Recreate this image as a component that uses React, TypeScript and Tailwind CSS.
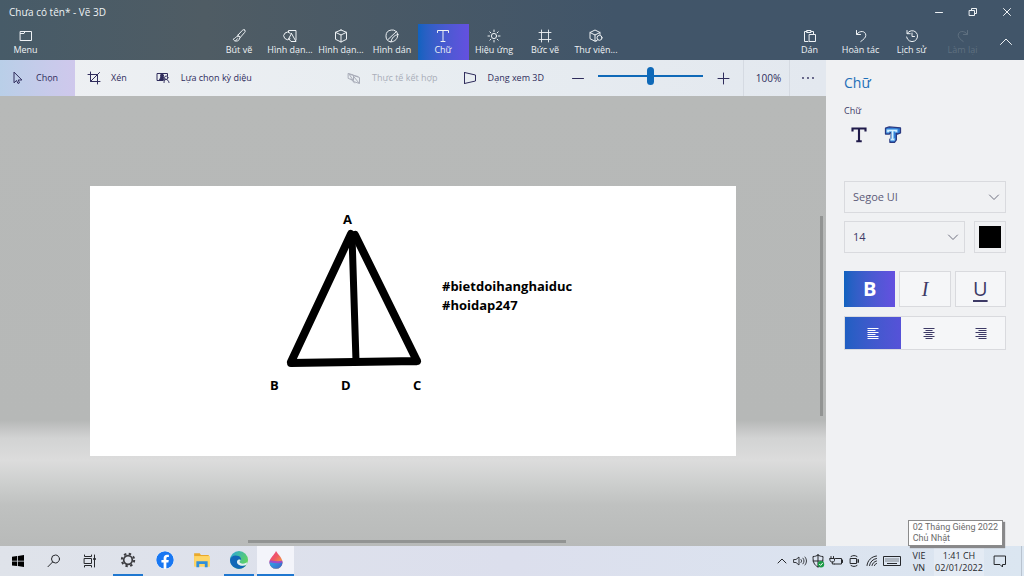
import React, {ReactNode, useState} from 'react'
import {FaFacebook} from 'react-icons/fa'

type IconProps = {
    children: ReactNode
    className?: string
}

const Icon = ({children, className = 'size-4'}: IconProps) => (
    <svg
        viewBox="0 0 16 16"
        className={className}
        fill="none"
        stroke="currentColor"
        strokeLinecap="round"
        strokeLinejoin="round"
        aria-hidden="true"
    >
        {children}
    </svg>
)

const BrushIcon = () => (
    <Icon>
        <path d="M13.600 2c.9.8.7 1.700.1 2.400L9.300 9.400 6.700 7.400l4.600-5c.7-.7 1.500-1 2.300-.4z"/>
        <path d="M6.700 7.400l2.600 2M6.500 8.500C4.500 8.300 4.500 10.500 2.300 11c.3 2.500 5.800 3.500 6.400-.7M4.500 13l2-2.300"/>
    </Icon>
)

const Shapes2DIcon = () => (
    <Icon>
        <path d="M8 10.800A3.800 3.800 0 1 1 8.300 5.200"/>
        <path d="M6.500 4V2.500h7.500V12M9.500 5.500l-3 5.500M9.500 5.500l4.500 8H9l-2-2.500"/>
    </Icon>
)

const CubeIcon = () => (
    <Icon>
        <path d="M8 2l5.500 2.300v7L8 14l-5.500-2.700v-7L8 2zM2.500 4.300L8 7l5.500-2.700M8 7v7"/>
    </Icon>
)

const StickerIcon = () => (
    <Icon>
        <path d="M13.800 6.500A6 6 0 1 0 7 13.900c.7-4 3-6.600 6.800-7.400z"/>
        <path d="M13.800 6.500C14 10.500 11 13.800 7 13.900M4 11.500l8.500-8"/>
    </Icon>
)

const TextIcon = () => (
    <Icon>
        <path d="M2.500 4.500V2.500h11v2M8 2.500v11M6 13.500h4"/>
    </Icon>
)

const SunIcon = () => (
    <Icon>
        <circle cx="8" cy="8" r="2.600"/>
        <path d="M8 2v1.600M8 12.400V14M2 8h1.600M12.400 8H14M3.800 3.800l1.100 1.100M11.100 11.100l1.100 1.100M3.800 12.200l1.100-1.100M11.100 4.900l1.100-1.100"/>
    </Icon>
)

const FrameIcon = () => (
    <Icon>
        <path d="M4.500 2v12M11.500 2v12M2 4.500h12M2 11.500h12" strokeWidth="0.900"/>
    </Icon>
)

const LibraryIcon = () => (
    <Icon>
        <path d="M8.500 12.500l-1.500.7-5-2.500V4.500L7 2l5 2.500v2M2 4.500L7 7l5-2.500M7 7v6"/>
        <circle cx="11.500" cy="9.800" r="2.500"/>
        <path d="M9.700 11.600L8 13.500"/>
    </Icon>
)

const PasteIcon = () => (
    <Icon>
        <path d="M6 13.500H2.500v-10H5M9 3.500h2.500v2.500M5 2.500h4v2H5zM7.500 6.500h6v7h-6z"/>
    </Icon>
)

const UndoIcon = () => (
    <Icon>
        <path d="M3.500 2.500v4h4M3.800 6.300c2.700-4.300 9-3.500 9 1 0 2.200-2 4-5 6.200"/>
    </Icon>
)

const RedoIcon = () => (
    <Icon>
        <path d="M12.500 2.500v4h-4M12.200 6.300c-2.700-4.300-9-3.500-9 1 0 2.200 2 4 5 6.200"/>
    </Icon>
)

const HistoryIcon = () => (
    <Icon>
        <path d="M3 2.500v3.200h3.200M3.200 5.500A5.500 5.500 0 1 1 2.600 9M8 5v3.500h2.500"/>
    </Icon>
)

type Tool = {
    label: string
    icon: ReactNode
    disabled?: boolean
}

const tools: Tool[] = [
    {label: 'Bút vẽ', icon: <BrushIcon/>},
    {label: 'Hình dạn...', icon: <Shapes2DIcon/>},
    {label: 'Hình dạn...', icon: <CubeIcon/>},
    {label: 'Hình dán', icon: <StickerIcon/>},
    {label: 'Chữ', icon: <TextIcon/>},
    {label: 'Hiệu ứng', icon: <SunIcon/>},
    {label: 'Bức vẽ', icon: <FrameIcon/>},
    {label: 'Thư viện...', icon: <LibraryIcon/>},
]

const historyTools: Tool[] = [
    {label: 'Dán', icon: <PasteIcon/>},
    {label: 'Hoàn tác', icon: <UndoIcon/>},
    {label: 'Lịch sử', icon: <HistoryIcon/>},
    {label: 'Làm lại', icon: <RedoIcon/>, disabled: true},
]

type ToolButtonProps = {
    tool: Tool
    selected?: boolean
    onClick?: () => void
}

const ToolButton = ({tool, selected = false, onClick}: ToolButtonProps) => (
    <button
        type="button"
        disabled={tool.disabled}
        onClick={onClick}
        className={`flex w-[51px] flex-col items-center pt-1 text-[9px] leading-3 whitespace-nowrap disabled:text-[#5f7080] ${
            selected ? 'bg-linear-to-r from-[#0f62bf] to-[#6450e0]' : ''
        }`}
    >
        {tool.icon}
        {tool.label}
    </button>
)

const Header = () => {

    const [active, setActive] = useState(4)

    return (
        <header className="bg-linear-to-r from-[#475b68] via-[#4f5c64] via-20% to-[#415569] to-60% text-[#eef2f5]">
            <div className="flex h-6 items-center">
                <h1 className="flex-1 pl-[9px] text-[10px]">Chưa có tên* - Vẽ 3D</h1>
                <button type="button" aria-label="Thu nhỏ" className="grid h-6 w-[34px] place-items-center">
                    <Icon><path d="M4.500 8.500h7"/></Icon>
                </button>
                <button type="button" aria-label="Khôi phục" className="grid h-6 w-[34px] place-items-center">
                    <Icon><path d="M4.500 6.500h5v5h-5zM6.500 6V4.500h5v5H10"/></Icon>
                </button>
                <button type="button" aria-label="Đóng" className="grid h-6 w-[34px] place-items-center">
                    <Icon><path d="M4.500 4.500l7 7M11.500 4.500l-7 7"/></Icon>
                </button>
            </div>
            <div className="flex h-9 justify-between">
                <ToolButton
                    tool={{
                        label: 'Menu',
                        icon: <Icon><path d="M2.500 3.500h11v9h-11zM2.500 5.500H6l1-2"/></Icon>,
                    }}
                />
                <nav className="flex">
                    {tools.map((tool, i) => (
                        <ToolButton key={i} tool={tool} selected={i === active} onClick={() => setActive(i)}/>
                    ))}
                </nav>
                <div className="flex">
                    {historyTools.map((tool) => <ToolButton key={tool.label} tool={tool}/>)}
                    <button type="button" aria-label="Thu gọn" className="grid w-9 place-items-center">
                        <Icon><path d="M2.500 10.500L8 5l5.500 5.500"/></Icon>
                    </button>
                </div>
            </div>
        </header>
    )
}

const OptionBar = () => {

    const [zoom, setZoom] = useState(50)

    return (
        <div className="flex h-9 items-stretch bg-linear-to-r from-[#eef0f3] via-[#e8edf1] to-[#e3e8ef] text-[9px] whitespace-nowrap text-[#2f2c5c]">
            <button type="button" className="flex w-[75px] items-center gap-[11px] bg-linear-to-r from-[#b9cfe8] to-[#cfc8ec] pl-[9px]">
                <Icon><path d="M5 2.500v10.300l2.500-2.300 1.500 3 1.500-.7L9.200 10h3.300z"/></Icon>
                Chọn
            </button>
            <button type="button" className="flex items-center gap-[9px] pl-[11px]">
                <Icon><path d="M4.500 2v9.500h9.500M2 4.500h9.500v9.500M4.500 11.500l9-9"/></Icon>
                Xén
            </button>
            <button type="button" className="flex items-center gap-[10px] pl-7">
                <Icon>
                    <path d="M8 10.500H2v-7h10.500V6"/>
                    <path d="M7 4.500L4.500 10H9z" fill="currentColor"/>
                    <circle cx="7" cy="5.500" r="1.500" fill="currentColor"/>
                    <path d="M9 12.500c0-2 1-3 2.200-3s2.300 1 2.800 3"/>
                    <circle cx="11.200" cy="7.700" r="1.700"/>
                </Icon>
                Lựa chọn kỳ diệu
            </button>
            <div className="flex-1"/>
            <button type="button" disabled className="flex items-center gap-[10px] text-[#a9adb9]">
                <Icon>
                    <path d="M2.500 3.500l5 1.500v5.500l-5-2zM7.500 5.500l6 2v6l-6-2M4 4.500l8 2M5 9l3.500 4M8 7l5 6M3 4l4 6"/>
                </Icon>
                Thực tế kết hợp
            </button>
            <button type="button" className="flex items-center gap-[10px] pl-6">
                <Icon><path d="M2.500 2.500v11M2.500 2.500l11 2.500v6l-11 2.500"/></Icon>
                Dạng xem 3D
            </button>
            <button type="button" aria-label="Thu nhỏ hình" className="ml-[26px] grid w-4 place-items-center">
                <Icon><path d="M2.500 8.500h11"/></Icon>
            </button>
            <input
                type="range"
                aria-label="Thu phóng"
                value={zoom}
                onChange={(e) => setZoom(Number(e.target.value))}
                className="mx-3 mb-1 w-[105px] appearance-none bg-transparent [&::-webkit-slider-runnable-track]:h-[2px] [&::-webkit-slider-runnable-track]:bg-[#0f69b8] [&::-webkit-slider-thumb]:-mt-2 [&::-webkit-slider-thumb]:h-[18px] [&::-webkit-slider-thumb]:w-[7px] [&::-webkit-slider-thumb]:appearance-none [&::-webkit-slider-thumb]:rounded-full [&::-webkit-slider-thumb]:bg-[#0f69b8]"
            />
            <button type="button" aria-label="Phóng to hình" className="mr-3 grid w-4 place-items-center">
                <Icon><path d="M8.500 3v11M3 8.500h11"/></Icon>
            </button>
            <button type="button" className="w-[47px] border-x border-[#d5dae2] pl-1 text-[10px]">100%</button>
            <button type="button" aria-label="Thêm" className="grid w-9 place-items-center">
                <Icon>
                    <g fill="currentColor" stroke="none">
                        <circle cx="3" cy="8" r="0.900"/>
                        <circle cx="8" cy="8" r="0.900"/>
                        <circle cx="13" cy="8" r="0.900"/>
                    </g>
                </Icon>
            </button>
        </div>
    )
}

const Workspace = () => (
    <main className="relative flex flex-1 items-center justify-center bg-[linear-gradient(#b7b9b8_0%,#b6b8b7_72%,#d2d3d3_76%,#dcdcdc_81%,#cdcfce_86%,#bfc1c0_91%,#b8bab9_100%)]">
        <div className="relative h-[270px] w-[646px] bg-white text-[13px] leading-[19px] font-bold text-black">
            <svg viewBox="0 0 646 270" className="size-full" fill="none" stroke="#000" strokeWidth="8" strokeLinecap="round" aria-hidden="true">
                <path d="M261 48L201 176M265 49l62 126M201 177l126-2"/>
                <path d="M262 50l4 125" strokeWidth="7"/>
            </svg>
            <span className="absolute top-6 left-[253px]">A</span>
            <span className="absolute top-[190px] left-[180px]">B</span>
            <span className="absolute top-[190px] left-[251px]">D</span>
            <span className="absolute top-[190px] left-[323px]">C</span>
            <p className="absolute top-[91px] left-[352px]">
                #bietdoihanghaiduc<br/>
                #hoidap247
            </p>
        </div>
        <div className="absolute top-[120px] right-[3px] h-[200px] w-[3px] bg-[#929493]"/>
        <div className="absolute bottom-[3px] left-[30%] h-[3px] w-[318px] bg-[#929493]"/>
    </main>
)

const SelectArrow = () => (
    <span className="pointer-events-none absolute inset-y-0 right-1 grid place-items-center text-[#6f7080]">
        <Icon><path d="M3.500 6L8 10.500 12.500 6"/></Icon>
    </span>
)

const alignments = [
    {label: 'Căn trái', d: 'M2.500 3.500h11M2.500 5.500h8M2.500 7.500h11M2.500 9.500h8M2.500 11.500h11M2.500 13.500h11'},
    {label: 'Căn giữa', d: 'M2.500 3.500h11M4.500 5.500h7M2.500 7.500h11M4.500 9.500h7M2.500 11.500h11M4.500 13.500h7'},
    {label: 'Căn phải', d: 'M2.500 3.500h11M5.500 5.500h8M2.500 7.500h11M5.500 9.500h8M2.500 11.500h11M5.500 13.500h8'},
]

const TextPanel = () => {

    const [align, setAlign] = useState(0)

    return (
        <aside className="w-[198px] bg-[#f0f1f3] px-[18px] pt-[13px] text-[#3d3a66]">
            <h2 className="text-[14px] leading-5 text-[#1e6fb8]">Chữ</h2>
            <h3 className="mt-3 text-[9px] leading-3">Chữ</h3>
            <div className="mt-2 flex gap-[14px] pl-[5px]">
                <button type="button" aria-label="Chữ 2D" className="text-[#1f1a4a]">
                    <Icon className="size-5">
                        <path d="M2.800 5.200V2.800h10.400v2.400M8 3v10M5.800 13h4.400" strokeWidth="1.700" strokeLinecap="butt" strokeLinejoin="miter"/>
                    </Icon>
                </button>
                <button type="button" aria-label="Chữ 3D">
                    <Icon className="size-5">
                        <path d="M2 2.500L5 1.500l9 .8v4l-2.500 1-.8-1v5.500l-1.500 2H5.500v-2.500L6.500 11V6.500L5.500 6l-.3 1.200H2z" fill="#2f7bd6" stroke="#2a3a80"/>
                        <path d="M3 5.800V3.500h8.500v2.300h-1.800V5.200H8.500v5.600h.8v1.500H6v-1.500h.8V5.200H5v.6z" fill="#d7f0ff" stroke="#6db9ee" strokeWidth="0.500"/>
                    </Icon>
                </button>
            </div>
            <div className="relative mt-9">
                <select aria-label="Phông chữ" className="h-8 w-full appearance-none border border-[#d9dade] px-2 text-[11px] text-[#5c5b78]">
                    <option>Segoe UI</option>
                </select>
                <SelectArrow/>
            </div>
            <div className="mt-2 flex gap-[9px]">
                <div className="relative flex-1">
                    <select aria-label="Cỡ chữ" className="h-8 w-full appearance-none border border-[#d9dade] px-2 text-[11px]">
                        <option>14</option>
                    </select>
                    <SelectArrow/>
                </div>
                <button type="button" aria-label="Màu chữ" className="grid size-8 place-items-center border border-[#d9dade]">
                    <span className="size-[22px] bg-black"/>
                </button>
            </div>
            <div className="mt-[18px] grid h-9 grid-cols-3 gap-1 text-[20px] leading-6">
                <button type="button" aria-label="Đậm" className="bg-linear-to-r from-[#0f62bf] to-[#6450e0] font-bold text-white">B</button>
                <button type="button" aria-label="Nghiêng" className="border border-[#d9dade] bg-[#f5f6f8] font-['Liberation_Serif',serif] italic">I</button>
                <button type="button" aria-label="Gạch chân" className="border border-[#d9dade] bg-[#f5f6f8] underline decoration-2 underline-offset-4">U</button>
            </div>
            <div className="mt-[9px] grid h-[34px] grid-cols-[56px_56px_1fr] border border-[#d9dade] bg-[#f5f6f8]">
                {alignments.map(({label, d}, i) => (
                    <button
                        key={label}
                        type="button"
                        aria-label={label}
                        onClick={() => setAlign(i)}
                        className={`grid place-items-center ${i === align ? 'bg-linear-to-r from-[#1f5fc2] to-[#5652d8] text-white' : ''}`}
                    >
                        <Icon><path d={d} strokeLinecap="butt"/></Icon>
                    </button>
                ))}
            </div>
        </aside>
    )
}

const taskbarApps = [
    {
        label: 'Cài đặt',
        running: true,
        icon: (
            <Icon>
                <circle cx="8" cy="8" r="4.300" stroke="#3c3c40" strokeWidth="1.700"/>
                <circle cx="8" cy="8" r="6.200" stroke="#3c3c40" strokeWidth="2" strokeDasharray="2.400 2.470" strokeLinecap="butt"/>
            </Icon>
        ),
    },
    {label: 'Facebook', icon: <FaFacebook className="size-[18px] rounded-full bg-white text-[#1877f2]"/>},
    {
        label: 'File Explorer',
        icon: (
            <Icon className="size-[18px]">
                <g stroke="none">
                    <path d="M1 2h5l1 1.500h7V13H1z" fill="#e9a92c"/>
                    <path d="M1 4.500h14V14H1z" fill="#ffd667"/>
                    <path d="M3 9h10v5.500h-2.500V11.500h-5v3H3z" fill="#2f8fdc"/>
                </g>
            </Icon>
        ),
    },
    {
        label: 'Microsoft Edge',
        running: true,
        icon: (
            <svg viewBox="0 0 18 18" className="size-[18px]" aria-hidden="true">
                <defs>
                    <linearGradient id="edgeTop" x1="0" y1="0" x2="1" y2="0.600">
                        <stop offset="0" stopColor="#2aa5de"/>
                        <stop offset="1" stopColor="#62d65b"/>
                    </linearGradient>
                </defs>
                <circle cx="9" cy="9" r="9" fill="url(#edgeTop)"/>
                <path d="M0 9c.5-4 5-5.500 8.500-4 2 .8 3 2.500 2.500 4-2.500-1.500-4.500 0-4 2.500.6 3 5 4 9.200 2.500A9 9 0 0 1 0 9z" fill="#1267b8"/>
                <path d="M11 9c-1.500.7-2 2-.7 3 2 1.400 6.200.5 7.200-1.200l-1.200 3.100C12 15.500 7.600 14.500 7 11.500c-.4-2.300 1.800-4 4-2.500z" fill="#e3edf7"/>
            </svg>
        ),
    },
    {
        label: 'Paint 3D',
        running: true,
        active: true,
        icon: (
            <svg viewBox="0 0 18 18" className="size-[18px]" aria-hidden="true">
                <defs>
                    <linearGradient id="dropTop" x1="0.200" y1="0" x2="0.900" y2="0.600">
                        <stop offset="0" stopColor="#ee3f86"/>
                        <stop offset="0.500" stopColor="#ef5a63"/>
                        <stop offset="1" stopColor="#f2a13e"/>
                    </linearGradient>
                    <linearGradient id="dropBottom" x1="0" y1="0" x2="1" y2="0.500">
                        <stop offset="0" stopColor="#2bb3ea"/>
                        <stop offset="1" stopColor="#3d63c9"/>
                    </linearGradient>
                    <clipPath id="drop">
                        <path d="M9 0c2 3.500 6.500 7 6.500 11.300A6.500 6.500 0 0 1 2.500 11.300C2.500 7 7.500 4 9 0z"/>
                    </clipPath>
                </defs>
                <g clipPath="url(#drop)">
                    <path d="M0 0h18v18H0z" fill="url(#dropTop)"/>
                    <path d="M0 9.500c5-1.500 8 3 18-1v6H0z" fill="#a04bc8"/>
                    <path d="M0 11.500c5-1 7 3 18-1v8H0z" fill="url(#dropBottom)"/>
                </g>
            </svg>
        ),
    },
]

const Taskbar = () => (
    <footer className="flex h-[30px] items-stretch bg-linear-to-r from-[#dfe3ea] via-[#dcdfed] to-[#dbe6f1] text-[9px] leading-3 text-[#26282c]">
        <button type="button" aria-label="Bắt đầu" className="grid w-9 place-items-center">
            <Icon className="size-4 text-black">
                <path d="M2 3.800l5-.7v4.600H2zM7.800 3L14 2v5.700H7.800zM2 8.500h5v4.600l-5-.7zM7.800 8.500H14V14l-6.200-.9z" fill="currentColor" stroke="none"/>
            </Icon>
        </button>
        <button type="button" aria-label="Tìm kiếm" className="grid w-9 place-items-center">
            <Icon><circle cx="9.500" cy="6" r="4"/><path d="M6.600 9L2 13.700"/></Icon>
        </button>
        <button type="button" aria-label="Xem tác vụ" className="grid w-9 place-items-center">
            <Icon>
                <path d="M2.500 2v1.500h7V2M2.500 5.500h7v5h-7zM2.500 14v-1.500h7V14M12.500 2v12"/>
                <path d="M12.500 5v2" strokeWidth="2.500" strokeLinecap="butt"/>
            </Icon>
        </button>
        <div className="ml-px flex">
            {taskbarApps.map(({label, icon, running, active}) => (
                <button
                    key={label}
                    type="button"
                    aria-label={label}
                    className={`flex w-[37px] flex-col items-center ${active ? 'bg-[#f3f4fa]' : ''}`}
                >
                    <span className="grid flex-1 place-items-center">{icon}</span>
                    <span className={`h-[2px] ${active ? 'w-full' : 'w-[30px]'} ${running ? 'bg-[#1f77d0]' : ''}`}/>
                </button>
            ))}
        </div>
        <div className="ml-auto flex items-center gap-[2px]">
            <Icon><path d="M4 10l4-4 4 4"/></Icon>
            <Icon>
                <path d="M2 6.500h2L7 4v8L4 9.500H2zM9 6.500c.8 1 .8 2 0 3M11 5.200c1.400 1.800 1.400 3.800 0 5.600M13 4c2 2.500 2 5.500 0 8" strokeWidth="0.900"/>
            </Icon>
            <Icon>
                <path d="M8 2c1.500 1 3 1.500 5 1.500C13 9 12 12 8 14 4 12 3 9 3 3.500 5 3.500 6.500 3 8 2zM8 2v12M3 8h10"/>
                <circle cx="11" cy="11.300" r="3.200" fill="#1c9b46" stroke="none"/>
                <path d="M9.500 11.300l1.100 1.100 1.900-2.200" stroke="#fff"/>
            </Icon>
            <Icon>
                <path d="M7.500 5.500h6v5.500h-7M14.500 7v2.500M3 3.500v2M5.500 3.500v2M2 5.500h4.500v2c0 1-.8 1.500-2.200 1.500S2 8.500 2 7.500zM4.300 9v2h2"/>
            </Icon>
            <Icon>
                <path d="M4.500 5.500h6v5h-6zM10.500 7.500l2-1v3l-2-1M5 3.500c2-1.300 4-1.300 6 0M5 12.500c2 1.300 4 1.300 6 0"/>
            </Icon>
            <Icon>
                <path d="M3 12.500C3.500 7.500 7.500 3.500 12.500 3M5.500 12.500c.5-3.500 3.500-6.500 7-7M8 12.500c.5-2.200 2.200-4 4.500-4.500M10.500 12.500c.3-1 1-1.700 2-2"/>
            </Icon>
            <svg viewBox="0 0 20 14" className="mr-[2px] h-[14px] w-5" fill="none" stroke="currentColor" aria-hidden="true">
                <path d="M1.500 2.500h17v9h-17z"/>
                <path d="M3.500 5h13M3.500 7h13" strokeDasharray="1 1"/>
                <path d="M5 9.500h10"/>
            </svg>
        </div>
        <button type="button" className="w-[30px] pt-[2px]">VIE<br/>VN</button>
        <div className="relative flex">
            <button type="button" className="w-[50px] bg-[#e4ebf4] pt-[2px] whitespace-nowrap">1:41 CH<br/>02/01/2022</button>
            <div role="tooltip" className="absolute right-[-19px] bottom-full border border-[#8b8b8b] bg-white px-1 py-px font-['Roboto',sans-serif] text-[9px] leading-[11px] whitespace-nowrap text-[#6b6b6b] shadow-[2px_2px_1px_#88888a]">
                02 Tháng Giêng 2022<br/>
                Chủ Nhật
            </div>
        </div>
        <button type="button" aria-label="Thông báo" className="grid w-8 place-items-center">
            <Icon><path d="M2.500 3h11v8.500h-3v2.500L8 11.500H2.500z"/></Icon>
        </button>
        <div className="ml-[5px] w-[3px] border-l border-[#b9c3cf]"/>
    </footer>
)

const App = () => (
    <div className="flex min-h-screen flex-col font-['Open_Sans','Noto_Sans',sans-serif]">
        <Header/>
        <div className="flex flex-1">
            <div className="flex flex-1 flex-col">
                <OptionBar/>
                <Workspace/>
            </div>
            <TextPanel/>
        </div>
        <Taskbar/>
    </div>
)

export default App
